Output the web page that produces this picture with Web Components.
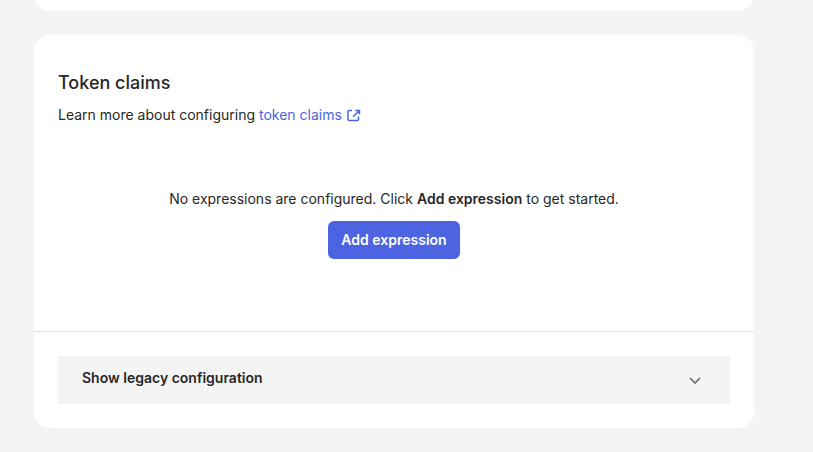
<!DOCTYPE html>
<html lang="en">
<head>
<meta charset="utf-8">
<title>Token claims</title>
<style>
  body {
    margin: 0;
    background: #f4f4f4;
    color: #272727;
    font: 14px/20px Inter, "Liberation Sans", sans-serif;
  }
  h2 {
    margin: 0;
    font-size: 18px;
    line-height: 24px;
    font-weight: 500;
  }
  p {
    margin: 0;
  }
  b {
    font-weight: 600;
  }
</style>
</head>
<body>
<settings-page>
  <settings-card></settings-card>
  <settings-card>
    <h2 slot="title">Token claims</h2>
    <p slot="intro">Learn more about configuring <doc-link href="#token-claims">token claims</doc-link></p>
    <empty-state action="Add expression">
      <p>No expressions are configured. Click <b>Add expression</b> to get started.</p>
    </empty-state>
    <toggle-panel slot="footer">Show legacy configuration</toggle-panel>
  </settings-card>
</settings-page>

<script>
class SettingsPage extends HTMLElement {
  constructor() {
    super();
    this.attachShadow({ mode: "open" });
    this.shadowRoot.innerHTML = `
      <style>
        :host {
          display: flex;
          flex-direction: column;
          gap: 24px;
          padding: 0 59px 24px 34px;
          overflow: hidden;
        }
      </style>
      <slot></slot>
    `;
  }
}

class SettingsCard extends HTMLElement {
  connectedCallback() {
    this.attachShadow({ mode: "open" });
    // A card with no content is only the end of the section above
    const empty = !this.children.length;
    this.shadowRoot.innerHTML = `
      <style>
        :host {
          display: block;
          background: #fff;
          border-radius: 16px;
          overflow: hidden;
        }
        :host(:empty) {
          height: 35px;
          margin-top: -24px;
        }
        header {
          display: flex;
          flex-direction: column;
          gap: 10px;
          padding: 36px 24px 0;
        }
        footer {
          border-top: 1px solid #e1e1e1;
          padding: 24px;
        }
      </style>
      ${empty ? "" : `
        <header>
          <slot name="title"></slot>
          <slot name="intro"></slot>
        </header>
        <slot></slot>
        <footer><slot name="footer"></slot></footer>
      `}
    `;
  }
}

class DocLink extends HTMLElement {
  connectedCallback() {
    this.attachShadow({ mode: "open" });
    this.shadowRoot.innerHTML = `
      <style>
        :host {
          display: inline;
        }
        a {
          color: #4c64e1;
          text-decoration: none;
        }
        svg {
          margin-left: 1px;
          vertical-align: -2px;
        }
      </style>
      <a href="${this.getAttribute("href")}"><slot></slot>
        <svg width="14" height="14" viewBox="0 0 14 14" fill="none" stroke="currentColor" stroke-width="1.5" aria-hidden="true">
          <path d="M5 2.5H2Q1 2.5 1 3.5V11.5Q1 12.5 2 12.5H10.5Q11.5 12.5 11.5 11.5V8.5M8.2 2.5h4.3V6.6M12.3 2.7L6 8.8"/>
        </svg></a>
    `;
  }
}

class EmptyState extends HTMLElement {
  connectedCallback() {
    this.attachShadow({ mode: "open" });
    this.shadowRoot.innerHTML = `
      <style>
        :host {
          display: flex;
          flex-direction: column;
          align-items: center;
          gap: 12px;
          padding: 64px 24px 72px;
          text-align: center;
        }
        button {
          padding: 9px 13px;
          border: 0;
          border-radius: 6px;
          background: #4c64e1;
          color: #fff;
          font: inherit;
          font-weight: 600;
          cursor: pointer;
        }
      </style>
      <slot></slot>
      <button type="button">${this.getAttribute("action")}</button>
    `;
  }
}

class TogglePanel extends HTMLElement {
  connectedCallback() {
    this.attachShadow({ mode: "open" });
    this.shadowRoot.innerHTML = `
      <style>
        :host {
          display: block;
        }
        button {
          display: flex;
          align-items: flex-start;
          justify-content: space-between;
          width: 100%;
          padding: 12px 28px 16px 24px;
          border: 0;
          background: #f4f4f4;
          color: inherit;
          font: inherit;
          font-weight: 600;
          text-align: left;
          cursor: pointer;
        }
        svg {
          align-self: flex-end;
        }
      </style>
      <button type="button" aria-expanded="false">
        <span><slot></slot></span>
        <svg width="14" height="14" viewBox="0 0 14 14" fill="none" stroke="#6e6e6e" stroke-width="1.6" aria-hidden="true">
          <path d="M2 4l5 5 5-5"/>
        </svg>
      </button>
    `;
    const button = this.shadowRoot.querySelector("button");
    button.addEventListener("click", () => {
      button.setAttribute("aria-expanded", button.getAttribute("aria-expanded") === "false");
    });
  }
}

customElements.define("settings-page", SettingsPage);
customElements.define("settings-card", SettingsCard);
customElements.define("doc-link", DocLink);
customElements.define("empty-state", EmptyState);
customElements.define("toggle-panel", TogglePanel);
</script>
</body>
</html>
